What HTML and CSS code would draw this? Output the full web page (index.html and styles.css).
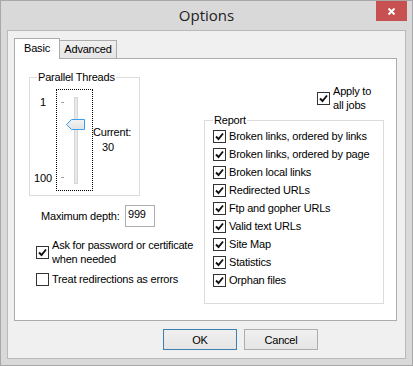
FILE: index.html
```html
<!DOCTYPE html>
<html lang="en">
<head>
  <meta charset="UTF-8" />
  <title>Options</title>
  <link rel="stylesheet" href="styles.css">
</head>
<body>
  <div class="window">
    <div class="titlebar">
      <span class="title">Options</span>
      <button class="close" title="Close">
        <svg width="7" height="7" viewBox="0 0 7 7"><path d="M0.5 0.5 L6.5 6.5 M6.5 0.5 L0.5 6.5" stroke="#fff" stroke-width="2"/></svg>
      </button>
    </div>
    <div class="client">
      <div class="tabs">
        <div class="tab active">Basic</div>
        <div class="tab">Advanced</div>
      </div>
      <div class="tab-page">
        <div class="col-left">
          <fieldset class="group threads">
            <legend>Parallel Threads</legend>
            <div class="slider-row">
              <div class="scale"><span>1</span><span>100</span></div>
              <div class="slider">
                <svg width="35" height="100" viewBox="0 0 35 100">
                  <rect x="17.5" y="7.5" width="3" height="86" fill="#e7eaea" stroke="#d6d6d6"/>
                  <path d="M4 12.5 H7 M4 87.5 H7" stroke="#a0a0a0"/>
                  <defs>
                    <linearGradient id="thumb" x1="0" y1="0" x2="0" y2="1">
                      <stop offset="0" stop-color="#f3f3f3"/>
                      <stop offset="1" stop-color="#e3e3e3"/>
                    </linearGradient>
                  </defs>
                  <path d="M9.5 34.5 L14.5 29.5 H27.5 V39.5 H14.5 Z" fill="url(#thumb)" stroke="#3c9ef0"/>
                </svg>
              </div>
              <div class="current"><span>Current:</span><span class="value">30</span></div>
            </div>
          </fieldset>
          <div class="depth-row">
            <span>Maximum depth:</span>
            <span class="textbox">999</span>
          </div>
          <label class="check multi ask">
            <span class="box"><svg width="11" height="11" viewBox="0 0 11 11"><path d="M2 5.5 L4.5 8 L9 2.5" fill="none" stroke="#111" stroke-width="1.9"/></svg></span>
            <span>Ask for password or certificate<br>when needed</span>
          </label>
          <label class="check treat">
            <span class="box"></span>
            <span>Treat redirections as errors</span>
          </label>
        </div>
        <div class="col-right">
          <label class="check multi apply">
            <span class="box"><svg width="11" height="11" viewBox="0 0 11 11"><path d="M2 5.5 L4.5 8 L9 2.5" fill="none" stroke="#111" stroke-width="1.9"/></svg></span>
            <span>Apply to<br>all jobs</span>
          </label>
          <fieldset class="group report">
            <legend>Report</legend>
            <label class="check row">
              <span class="box"><svg width="11" height="11" viewBox="0 0 11 11"><path d="M2 5.5 L4.5 8 L9 2.5" fill="none" stroke="#111" stroke-width="1.9"/></svg></span>
              <span>Broken links, ordered by links</span>
            </label>
            <label class="check row">
              <span class="box"><svg width="11" height="11" viewBox="0 0 11 11"><path d="M2 5.5 L4.5 8 L9 2.5" fill="none" stroke="#111" stroke-width="1.9"/></svg></span>
              <span>Broken links, ordered by page</span>
            </label>
            <label class="check row">
              <span class="box"><svg width="11" height="11" viewBox="0 0 11 11"><path d="M2 5.5 L4.5 8 L9 2.5" fill="none" stroke="#111" stroke-width="1.9"/></svg></span>
              <span>Broken local links</span>
            </label>
            <label class="check row">
              <span class="box"><svg width="11" height="11" viewBox="0 0 11 11"><path d="M2 5.5 L4.5 8 L9 2.5" fill="none" stroke="#111" stroke-width="1.9"/></svg></span>
              <span>Redirected URLs</span>
            </label>
            <label class="check row">
              <span class="box"><svg width="11" height="11" viewBox="0 0 11 11"><path d="M2 5.5 L4.5 8 L9 2.5" fill="none" stroke="#111" stroke-width="1.9"/></svg></span>
              <span>Ftp and gopher URLs</span>
            </label>
            <label class="check row">
              <span class="box"><svg width="11" height="11" viewBox="0 0 11 11"><path d="M2 5.5 L4.5 8 L9 2.5" fill="none" stroke="#111" stroke-width="1.9"/></svg></span>
              <span>Valid text URLs</span>
            </label>
            <label class="check row">
              <span class="box"><svg width="11" height="11" viewBox="0 0 11 11"><path d="M2 5.5 L4.5 8 L9 2.5" fill="none" stroke="#111" stroke-width="1.9"/></svg></span>
              <span>Site Map</span>
            </label>
            <label class="check row">
              <span class="box"><svg width="11" height="11" viewBox="0 0 11 11"><path d="M2 5.5 L4.5 8 L9 2.5" fill="none" stroke="#111" stroke-width="1.9"/></svg></span>
              <span>Statistics</span>
            </label>
            <label class="check row">
              <span class="box"><svg width="11" height="11" viewBox="0 0 11 11"><path d="M2 5.5 L4.5 8 L9 2.5" fill="none" stroke="#111" stroke-width="1.9"/></svg></span>
              <span>Orphan files</span>
            </label>
          </fieldset>
        </div>
      </div>
      <div class="buttons">
        <button class="btn default">OK</button>
        <button class="btn">Cancel</button>
      </div>
    </div>
  </div>
</body>
</html>
```

FILE: styles.css
```css
* { margin: 0; padding: 0; box-sizing: border-box; }
body {
  font-family: "Liberation Sans", Arial, sans-serif;
  font-size: 11px;
  line-height: 13px;
  letter-spacing: -0.2px;
  color: #000;
  background: #fff;
}
.window {
  width: 413px;
  height: 366px;
  border: 1px solid #a8a8a8;
  background: #d9d9d9;
}
.titlebar {
  display: grid;
  grid-template-columns: 1fr auto 1fr;
  height: 29px;
}
.title {
  grid-column: 2;
  font-family: "Open Sans", sans-serif;
  font-size: 15px;
  line-height: 29px;
  letter-spacing: 0;
  color: #222;
}
.close {
  grid-column: 3;
  justify-self: end;
  width: 31px;
  height: 20px;
  margin-right: 5px;
  border: none;
  background: #c75050;
  display: flex;
  align-items: center;
  justify-content: center;
}
.close svg { display: block; }
.client {
  margin: 0 6px;
  height: 329px;
  border: 1px solid #b9b9b9;
  background: #f0f0f0;
  padding: 7px 8px 0 6px;
}

/* tabs */
.tabs {
  display: flex;
  align-items: flex-end;
  height: 20px;
}
.tab {
  border: 1px solid #acacac;
  border-bottom: none;
  text-align: center;
}
.tab.active {
  width: 46px;
  height: 21px;
  margin-bottom: -1px;
  background: #fff;
  position: relative;
  z-index: 1;
  line-height: 19px;
}
.tab:not(.active) {
  width: 58px;
  height: 18px;
  margin-left: -1px;
  background: linear-gradient(#f0f0f0, #e5e5e5);
  line-height: 17px;
}
.tab-page {
  height: 263px;
  border: 1px solid #acacac;
  background: #fff;
  display: grid;
  grid-template-columns: 175px 180px;
  align-items: start;
  padding: 0 12px 0 14px;
}

/* group boxes */
.group {
  border: 1px solid #dcdcdc;
}
.group legend {
  line-height: 13px;
  padding: 0 1px;
}
.threads {
  width: 111px;
  margin-top: 12px;
  padding: 5px 0 4px 0;
}
.threads legend { margin-left: 7px; }
.slider-row {
  display: flex;
}
.scale {
  width: 25px;
  height: 102px;
  display: flex;
  flex-direction: column;
  justify-content: space-between;
  align-items: center;
  padding: 7px 0 6px 1px;
}
.slider {
  width: 37px;
  height: 102px;
  margin-left: 1px;
  border: 1px dotted #000;
}
.slider svg { display: block; }
.current {
  display: flex;
  flex-direction: column;
  padding-top: 36px;
  line-height: 15px;
}
.current .value { margin-left: 9px; }

.depth-row {
  display: grid;
  grid-template-columns: 84px 30px;
  align-items: center;
  margin-top: 9px;
  padding-left: 12px;
}
.textbox {
  height: 22px;
  border: 1px solid #abadb3;
  background: #fff;
  padding: 2px 2px;
}

/* check boxes */
.check {
  display: flex;
  align-items: center;
  gap: 3px;
}
.check.multi { line-height: 14px; }
.box {
  width: 13px;
  height: 13px;
  flex: none;
  border: 1px solid #333;
  background: #fff;
}
.box svg { display: block; }
.ask { margin-top: 11px; margin-left: 7px; }
.treat { margin-top: 7px; margin-left: 7px; }
.apply { margin-top: 25px; margin-left: 113px; }

.report {
  width: 180px;
  margin-top: 2px;
  padding: 0 0 14px 8px;
}
.report legend { margin-left: 0; }
.report .row { height: 18px; }

/* dialog buttons */
.buttons {
  display: flex;
  gap: 7px;
  margin-top: 8px;
  padding-left: 149px;
}
.btn {
  width: 74px;
  height: 21px;
  font-family: inherit;
  font-size: 11px;
  letter-spacing: -0.2px;
  color: #000;
  border: 1px solid #adadad;
  background: linear-gradient(#f0f0f0, #e5e5e5);
}
.btn.default { border-color: #3c7fb1; }
```
